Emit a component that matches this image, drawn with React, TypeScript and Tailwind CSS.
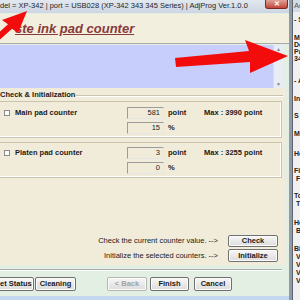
import React from "react";

const Btn = ({ children, className, disabled }: { children: React.ReactNode; className: string; disabled?: boolean }) => (
  <div
    className={
      "flex items-center justify-center rounded-[2px] border bg-gradient-to-b from-[#f7f7f7] to-[#dcdcdc] shadow-[inset_0_0_0_1px_#fcfcfc] font-bold " +
      (disabled ? "border-[#b5b5b5] text-[#a3a3a3]" : "border-[#707070] text-[#1a1a1a]") +
      " " +
      className
    }
  >
    {children}
  </div>
);

const Box = ({ value }: { value: string }) => (
  <div className="w-[37px] h-[12px] border border-t-[#9c9c9c] border-l-[#9c9c9c] border-b-[#e6e6e6] border-r-[#e6e6e6] bg-[#f1ecd9] flex items-center justify-end pr-[3px]">
    {value}
  </div>
);

const CounterGroup = ({ label, count, pct, max, top }: { label: string; count: string; pct: string; max: string; top: string }) => (
  <div className={"mr-[3px] border border-l-0 border-[#c9c4ae] shadow-[inset_-1px_-1px_0_#fff] pb-[3px] " + top}>
    <div className="flex items-center h-[12px]">
      <div className="w-[127px] flex items-center">
        <div className="ml-[4px] w-[6px] h-[6px] border border-[#8a8a8a] bg-white" />
        <span className="ml-[5px] font-bold">{label}</span>
      </div>
      <Box value={count} />
      <span className="ml-[4px] w-[36px] font-bold">point</span>
      <span className="font-bold">Max : {max} point</span>
    </div>
    <div className="flex items-center h-[12px] mt-[3px] pl-[127px]">
      <Box value={pct} />
      <span className="ml-[4px] font-bold">%</span>
    </div>
  </div>
);

// text of the window behind, cut by the screen edge
const side: [string, string][] = [
  ["- S", "mt-[4px]"],
  ["M", "mt-[11px]"],
  ["De", "mt-[0px]"],
  ["Pa", "mt-[0px]"],
  ["34", "mt-[0px]"],
  ["- A", "mt-[15px]"],
  ["In", "mt-[11px]"],
  ["S", "mt-[10px]"],
  ["M", "mt-[11px]"],
  ["He", "mt-[13px]"],
  ["Fi", "mt-[10px]"],
  [" F", "mt-[1px]"],
  ["To", "mt-[10px]"],
  [" T", "mt-[1px]"],
  ["He", "mt-[12px]"],
  [" B", "mt-[1px]"],
  ["Bi", "mt-[11px]"],
  [" V", "mt-[1px]"],
  [" V", "mt-[1px]"],
  [" V", "mt-[1px]"],
  [" V", "mt-[1px]"],
];

export default function App() {
  return (
    <div className="relative w-[300px] h-[300px] overflow-hidden flex bg-[#e3efe2] font-['Liberation_Sans',Arial,sans-serif] text-[7.5px] leading-[8px] text-[#1a1a1a]">
      {/* main window */}
      <div className="w-[292px] h-full flex flex-col border-r-[3px] border-[#8e9aa8] shrink-0">
        {/* title bar */}
        <div className="h-[13px] flex items-start bg-gradient-to-b from-[#e2e8ef] to-[#ccd6e2] shrink-0">
          <span className="pt-[2px] whitespace-nowrap text-[#262626]">del = XP-342 | port = USB028 (XP-342 343 345 Series) | AdjProg Ver.1.0.0</span>
          <div className="ml-auto mr-[1px] w-[23px] h-[9px] rounded-b-[3px] border border-t-0 border-[#7a2a22] bg-gradient-to-b from-[#e0a196] to-[#c2433a] flex items-center justify-center text-white text-[7px] font-bold">
            ✕
          </div>
        </div>

        {/* header band */}
        <div className="mt-[1px] h-[30px] bg-[#f3efdf] border-b border-[#a9a9a9] shrink-0 pl-[15px] pt-[7px]">
          <span className="text-[13px] leading-[15px] font-bold italic underline text-[#873a38] whitespace-nowrap">ste ink pad counter</span>
        </div>

        {/* blue area */}
        <div className="mt-[1px] h-[43px] w-[283px] flex bg-[#c7cefb] shrink-0">
          <div className="flex-1" />
          <div className="w-[10px] bg-[#e8edf3] border-l border-[#d8dde6] flex flex-col justify-between items-center text-[5px] leading-[8px] text-[#7f8690]">
            <span>▲</span>
            <span>▼</span>
          </div>
        </div>

        {/* form */}
        <div className="h-[177px] w-[285px] bg-[#f1ecd9] flex flex-col shrink-0">
          <div className="flex items-center pt-[3px] mr-[2px]">
            <span className="font-bold">Check &amp; Initialization</span>
            <div className="flex-1 ml-[1px] border-t border-[#c9c4ae] shadow-[0_1px_0_#fff]" />
          </div>
          <CounterGroup label="Main pad counter" count="581" pct="15" max="3990" top="mt-[2px] pt-[5px]" />
          <CounterGroup label="Platen pad counter" count="3" pct="0" max="3255" top="mt-[4px] pt-[4px]" />

          <div className="mt-[57px] flex items-center justify-end pr-[7px]">
            <span>Check the current counter value. --&gt;</span>
            <Btn className="ml-[10px] w-[50px] h-[12px]">Check</Btn>
          </div>
          <div className="mt-[2px] flex items-center justify-end pr-[7px]">
            <span>Initialize the selected counters. --&gt;</span>
            <Btn className="ml-[10px] w-[50px] h-[13px]">Initialize</Btn>
          </div>
        </div>

        {/* bottom bar */}
        <div className="h-[31px] shrink-0 flex flex-col">
          <div className="mt-[4px] w-[282px] border-t border-[#a6b0a6] shadow-[0_1px_0_#fff]" />
          <div className="mt-[7px] flex items-center">
            <Btn className="-ml-[8px] w-[42px] h-[14px]">Get Status</Btn>
            <Btn className="ml-[1px] w-[41px] h-[14px]">Cleaning</Btn>
            <Btn className="ml-[31px] w-[40px] h-[14px]" disabled>&lt; Back</Btn>
            <Btn className="ml-[3px] w-[39px] h-[14px]">Finish</Btn>
            <Btn className="ml-[5px] w-[38px] h-[14px]">Cancel</Btn>
          </div>
        </div>

        <div className="flex-1 bg-[#c3d8ee]" />
      </div>

      {/* neighbouring window */}
      <div className="flex-1 h-full bg-[#f0f0f0] border-l border-[#5c6470] flex flex-col overflow-hidden">
        <div className="h-[12px] shrink-0 bg-[#d3dbe5] pl-[1px] pt-[2px] text-[#555] whitespace-nowrap">Adj</div>
        <div className="pl-[1px] font-bold text-[7px] text-[#222] whitespace-pre">
          {side.map(([t, m], i) => (
            <div key={i} className={"h-[7px] leading-[7px] " + m}>
              {t}
            </div>
          ))}
        </div>
      </div>

      {/* red annotation arrows */}
      <svg className="absolute inset-0 pointer-events-none" width="300" height="300" viewBox="0 0 300 300">
        <polygon fill="#f20c0c" points="27,11 18,33 12,28.7 -10,48.7 -14,44.3 8,24.3 2,20" />
        <polygon fill="#f20c0c" points="175,58 249,51 245,40 288,56 250,73 250,62 176,67" />
      </svg>
    </div>
  );
}
